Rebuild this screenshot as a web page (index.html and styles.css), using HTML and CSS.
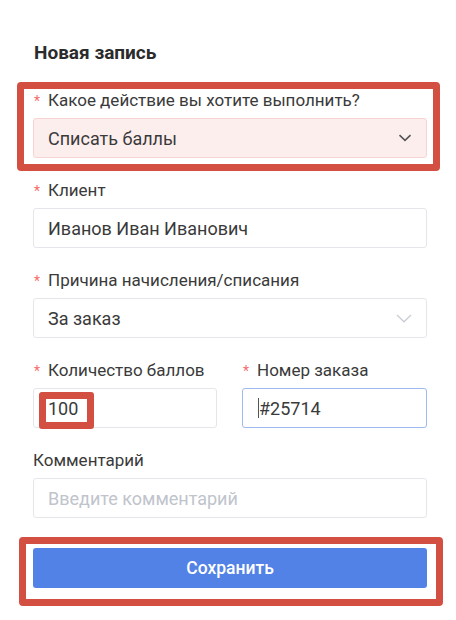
FILE: index.html
```html
<!DOCTYPE html>
<html lang="ru">
<head>
<meta charset="utf-8">
<title>Новая запись</title>
<link rel="stylesheet" href="styles.css">
</head>
<body>
<main class="form">
  <h1 class="title">Новая запись</h1>

  <div class="field marked">
    <div class="label"><span class="req">*</span>Какое действие вы хотите выполнить?</div>
    <div class="control select danger">
      <span class="value">Списать баллы</span>
      <svg class="arrow dark" width="14" height="8" viewBox="0 0 14 8"><path d="M1.5 1.2 L7 6.4 L12.5 1.2" fill="none" stroke="#555" stroke-width="1.6"/></svg>
    </div>
  </div>

  <div class="field">
    <div class="label"><span class="req">*</span>Клиент</div>
    <div class="control"><span class="value">Иванов Иван Иванович</span></div>
  </div>

  <div class="field">
    <div class="label"><span class="req">*</span>Причина начисления/списания</div>
    <div class="control select">
      <span class="value">За заказ</span>
      <svg class="arrow" width="16" height="9" viewBox="0 0 16 9"><path d="M1 1 L8 7.8 L15 1" fill="none" stroke="#c8ccd3" stroke-width="1.2"/></svg>
    </div>
  </div>

  <div class="row">
    <div class="field">
      <div class="label"><span class="req">*</span>Количество баллов</div>
      <div class="control"><span class="value">100</span><span class="mark-small"></span></div>
    </div>
    <div class="field">
      <div class="label"><span class="req">*</span>Номер заказа</div>
      <div class="control focus"><span class="caret"></span><span class="value">#25714</span></div>
    </div>
  </div>

  <div class="field">
    <div class="label">Комментарий</div>
    <div class="control"><span class="placeholder">Введите комментарий</span></div>
  </div>

  <div class="actions marked-btn">
    <button class="btn" type="button">Сохранить</button>
  </div>
</main>
</body>
</html>
```

FILE: styles.css
```css
* { box-sizing: border-box; }
html, body { margin: 0; padding: 0; background: #fff; }
body {
  font-family: Roboto, "Noto Sans", "Liberation Sans", sans-serif;
  color: #333;
  min-height: 620px;
}
.form {
  width: 394px;
  margin-left: 33px;
  padding-top: 41px;
  padding-bottom: 32px;
  display: flex;
  flex-direction: column;
}
.title {
  margin: 0 0 25px 1px;
  font-size: 19px;
  line-height: 24px;
  font-weight: 700;
  color: #2b2b2b;
}
.field {
  display: flex;
  flex-direction: column;
  margin-bottom: 22px;
  position: relative;
}
.label {
  font-size: 17px;
  line-height: 20px;
  height: 20px;
  margin-bottom: 8px;
  color: #3a3a3a;
  display: flex;
  align-items: center;
  white-space: nowrap;
}
.req {
  color: #f56c6c;
  font-size: 14px;
  width: 14px;
  margin-left: 1px;
  padding-top: 2px;
}
.control {
  height: 40px;
  border: 1px solid #e4e6eb;
  border-radius: 3px;
  padding: 0 14px;
  display: flex;
  align-items: center;
  font-size: 18px;
  color: #3a3a3a;
  position: relative;
  background: #fff;
  white-space: nowrap;
}
.select { justify-content: space-between; }
.danger {
  background: #fdeeee;
  border-color: #f8d3d3;
}
.arrow { display: block; }
.placeholder { color: #c0c4cc; }
.focus { border-color: #9cbaf0; }
.caret {
  width: 1px;
  height: 20px;
  background: #555;
  margin-left: 1px;
}
.row {
  display: grid;
  grid-template-columns: 184px 185px;
  column-gap: 25px;
}
.actions {
  position: relative;
  margin-top: 8px;
}
.btn {
  width: 100%;
  height: 40px;
  border: none;
  border-radius: 3px;
  background: #5282e6;
  color: #fff;
  font-family: inherit;
  font-size: 17.5px;
  font-weight: 500;
  display: block;
}

/* annotation overlays */
.marked::after {
  content: "";
  position: absolute;
  left: -16px;
  right: -13px;
  top: -8px;
  bottom: -13px;
  border: 7px solid #d24f42;
  border-radius: 4px;
  pointer-events: none;
}
.marked-btn::after {
  content: "";
  position: absolute;
  left: -14px;
  right: -16px;
  top: -11px;
  bottom: -18px;
  border: 7px solid #d24f42;
  border-radius: 4px;
  pointer-events: none;
}
.mark-small {
  position: absolute;
  left: 5px;
  top: 3px;
  width: 55px;
  height: 37px;
  border: 7px solid #d24f42;
  border-radius: 3px;
}
```
